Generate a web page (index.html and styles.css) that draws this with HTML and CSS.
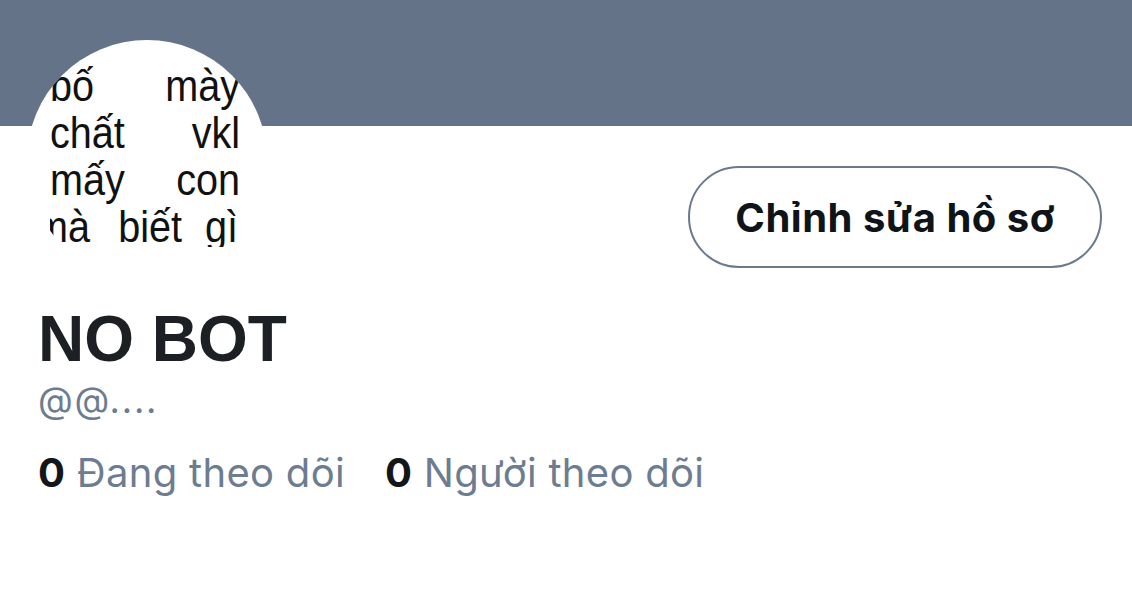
FILE: index.html
```html
<!DOCTYPE html>
<html lang="vi">
<head>
    <meta charset="UTF-8">
    <meta name="viewport" content="width=device-width, initial-scale=1.0">
    <title>NO BOT</title>
    <link rel="stylesheet" href="styles.css">
</head>
<body>
    <div class="banner"></div>
    <div class="profile">
        <div class="profile-top">
            <div class="avatar">
                <div class="avatar-text">
                    <div class="avatar-line"><span>bố</span><span>mày</span></div>
                    <div class="avatar-line"><span>chất</span><span>vkl</span></div>
                    <div class="avatar-line"><span>mấy</span><span>con</span></div>
                    <div class="avatar-line last"><span>mà</span><span>biết</span><span>gì</span></div>
                </div>
            </div>
            <button class="edit-btn">Chỉnh sửa hồ sơ</button>
        </div>
        <h1 class="name">NO BOT</h1>
        <div class="handle">@@....</div>
        <div class="stats">
            <span class="stat"><b>0</b> Đang theo dõi</span>
            <span class="stat"><b>0</b> Người theo dõi</span>
        </div>
    </div>
</body>
</html>
```

FILE: styles.css
```css
/* Trang hồ sơ */
body {
    margin: 0;
    font-family: Inter, "Noto Sans", sans-serif;
    background-color: #fff;
    color: #14171a;
}
.banner {
    height: 126px;
    background-color: #657389;
}
.profile {
    padding: 0 30px 0 38px;
}
.profile-top {
    display: flex;
    justify-content: space-between;
    align-items: flex-start;
}
.avatar {
    width: 240px;
    height: 240px;
    margin: -86px 0 0 -11px;
    border-radius: 50%;
    background-color: #fff;
    overflow: hidden;
    flex-shrink: 0;
}
.avatar-text {
    width: 216px;
    height: 185px;
    margin: 14px 0 0 23px;
    padding-top: 8px;
    transform: scaleX(0.88);
    transform-origin: left top;
    font-family: "Liberation Sans", Arial, sans-serif;
    font-size: 45px;
    line-height: 47px;
    color: #111;
    overflow: hidden;
}
.avatar-line {
    display: flex;
    justify-content: space-between;
    white-space: nowrap;
}
.avatar-line.last {
    justify-content: flex-start;
    margin-left: -17px;
}
.avatar-line.last span:nth-child(1) {
    margin-right: 32px;
}
.avatar-line.last span:nth-child(2) {
    margin-right: 26px;
}
.edit-btn {
    margin-top: 40px;
    width: 414px;
    height: 102px;
    border: 2px solid #6a798e;
    border-radius: 51px;
    background-color: #fff;
    font-family: Inter, "Noto Sans", sans-serif;
    font-size: 40px;
    font-weight: 700;
    letter-spacing: 0.5px;
    color: #0f1419;
    cursor: pointer;
}
.name {
    margin: 23px 0 0;
    font-family: "Liberation Sans", Arial, sans-serif;
    font-size: 64px;
    font-weight: 700;
    line-height: 72px;
    color: #1c1f23;
}
.handle {
    margin-top: 3px;
    font-size: 36px;
    line-height: 44px;
    letter-spacing: 1.8px;
    color: #6d7c90;
}
.stats {
    display: flex;
    gap: 40px;
    margin-top: 26px;
    font-size: 40px;
    line-height: 50px;
    letter-spacing: 0.3px;
    color: #6d7c90;
}
.stat b {
    color: #14171a;
}
```
